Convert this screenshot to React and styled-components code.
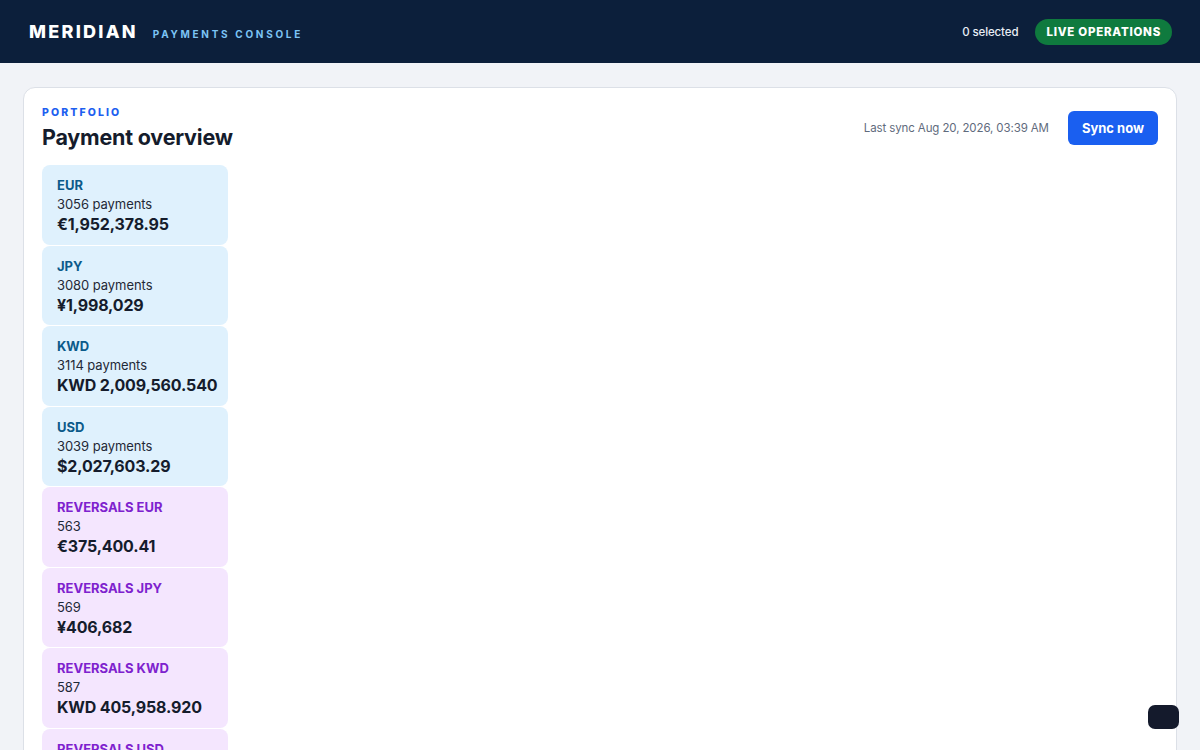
import React from "react";
import styled, { createGlobalStyle } from "styled-components";

// 통화별 요약 타일 데이터
const TILES = [
  { kind: "payment", label: "EUR", count: "3056 payments", amount: "€1,952,378.95" },
  { kind: "payment", label: "JPY", count: "3080 payments", amount: "¥1,998,029" },
  { kind: "payment", label: "KWD", count: "3114 payments", amount: "KWD 2,009,560.540" },
  { kind: "payment", label: "USD", count: "3039 payments", amount: "$2,027,603.29" },
  { kind: "reversal", label: "REVERSALS EUR", count: "563", amount: "€375,400.41" },
  { kind: "reversal", label: "REVERSALS JPY", count: "569", amount: "¥406,682" },
  { kind: "reversal", label: "REVERSALS KWD", count: "587", amount: "KWD 405,958.920" },
  { kind: "reversal", label: "REVERSALS USD", count: "571", amount: "$402,117.06" },
];

const Global = createGlobalStyle`
  * { box-sizing: border-box; }
  body {
    margin: 0;
    background: #f1f3f7;
    font-family: Inter, "Noto Sans", "Liberation Sans", sans-serif;
    color: #111827;
  }
  button { font-family: inherit; }
`;

const App = () => {
  return (
    <>
      <Global />
      <TopBar>
        <Brand>
          <Logo>MERIDIAN</Logo>
          <Subtitle>PAYMENTS CONSOLE</Subtitle>
        </Brand>
        <TopRight>
          <Selected>0 selected</Selected>
          <LiveBadge>LIVE OPERATIONS</LiveBadge>
        </TopRight>
      </TopBar>

      <Main>
        <Panel>
          <PanelHead>
            <div>
              <Eyebrow>PORTFOLIO</Eyebrow>
              <Title>Payment overview</Title>
            </div>
            <HeadActions>
              <SyncInfo>Last sync Aug 20, 2026, 03:39 AM</SyncInfo>
              <SyncButton>Sync now</SyncButton>
            </HeadActions>
          </PanelHead>

          <TileList>
            {TILES.map((t, i) => (
              <Tile key={i} kind={t.kind}>
                <TileLabel kind={t.kind}>{t.label}</TileLabel>
                <TileCount>{t.count}</TileCount>
                <TileAmount>{t.amount}</TileAmount>
              </Tile>
            ))}
          </TileList>
        </Panel>
      </Main>

      <DockButton aria-label="toggle" />
    </>
  );
};

export default App;

const TopBar = styled.header`
  height: 63px;
  background: #0c1f3b;
  display: flex;
  align-items: center;
  justify-content: space-between;
  padding: 0 28px 0 29px;
`;

const Brand = styled.div`
  display: flex;
  align-items: baseline;
  gap: 15px;
`;

const Logo = styled.div`
  color: #ffffff;
  font-size: 18px;
  font-weight: 800;
  letter-spacing: 0.125em;
`;

const Subtitle = styled.div`
  color: #7cc4f5;
  font-size: 10px;
  font-weight: 700;
  letter-spacing: 0.27em;
`;

const TopRight = styled.div`
  display: flex;
  align-items: center;
  gap: 17px;
`;

const Selected = styled.span`
  color: #e8edf5;
  font-size: 11.5px;
  font-weight: 500;
  letter-spacing: -0.01em;
`;

const LiveBadge = styled.span`
  display: inline-flex;
  align-items: center;
  height: 26px;
  padding: 0 11px;
  border-radius: 13px;
  background: #0f7a3e;
  color: #ffffff;
  font-size: 11.5px;
  font-weight: 800;
  letter-spacing: 0.065em;
`;

const Main = styled.main`
  padding: 24px 23px 0;
`;

const Panel = styled.section`
  background: #ffffff;
  border: 1px solid #dce0e7;
  border-radius: 12px;
  padding: 18px 18px 24px;
`;

const PanelHead = styled.div`
  display: flex;
  align-items: center;
  justify-content: space-between;
  margin-bottom: 14px;
`;

const Eyebrow = styled.div`
  color: #1d5ff0;
  font-size: 10.5px;
  line-height: 14px;
  font-weight: 800;
  letter-spacing: 0.2em;
  margin-bottom: 3px;
`;

const Title = styled.h1`
  margin: 0;
  font-size: 21.5px;
  line-height: 28px;
  font-weight: 700;
  color: #151c2c;
  letter-spacing: -0.01em;
`;

const HeadActions = styled.div`
  display: flex;
  align-items: center;
  gap: 19px;
  margin-top: -2px;
`;

const SyncInfo = styled.span`
  font-size: 11.5px;
  letter-spacing: -0.01em;
  color: #5f6b7d;
`;

const SyncButton = styled.button`
  height: 34px;
  padding: 0 14px;
  border: none;
  border-radius: 6px;
  background: #1a5ff0;
  color: #ffffff;
  font-size: 13px;
  font-weight: 700;
`;

const TileList = styled.div`
  display: flex;
  flex-direction: column;
  gap: 1px;
  width: 186px;
`;

const Tile = styled.div`
  background: ${(p) => (p.kind === "reversal" ? "#f4e6fe" : "#dff1fd")};
  border-radius: 8px;
  padding: 11px 14px 10.5px 15px;
`;

const TileLabel = styled.div`
  color: ${(p) => (p.kind === "reversal" ? "#7e22ce" : "#0b5a8a")};
  font-size: 13px;
  line-height: 19px;
  font-weight: 700;
`;

const TileCount = styled.div`
  color: #1f2937;
  font-size: 13px;
  line-height: 19px;
  letter-spacing: -0.005em;
`;

const TileAmount = styled.div`
  color: #151c2c;
  font-size: 16px;
  line-height: 20px;
  font-weight: 700;
  letter-spacing: -0.01em;
  white-space: nowrap;
`;

const DockButton = styled.button`
  position: fixed;
  right: 21px;
  bottom: 21px;
  width: 31px;
  height: 24px;
  border: none;
  border-radius: 7px;
  background: #141a2c;
`;
